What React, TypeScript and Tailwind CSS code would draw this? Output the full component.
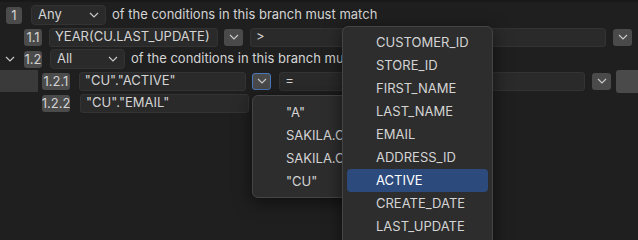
import React from "react";

const Chevron = ({ className = "" }: { className?: string }) => (
  <svg width="10" height="6" viewBox="0 0 10 6" className={className}>
    <path d="M1 1 L5 5 L9 1" fill="none" stroke="#c8c8c8" strokeWidth="1.2" />
  </svg>
);

const Badge = ({ label, w }: { label: string; w: string }) => (
  <div className={`${w} h-[17px] rounded-[3px] bg-[#4b4b4b] text-[#d2d2d2] flex items-center justify-center text-[13px] leading-none`}>
    {label}
  </div>
);

const Field = ({ text, w, ml }: { text: string; w: string; ml: string }) => (
  <div className={`${w} ${ml} h-[19px] rounded-[3px] bg-[#2a2a2a] border border-[#333333] flex items-center pl-[5px] text-[#d4d4d4] text-[13px] whitespace-nowrap overflow-hidden`}>
    {text}
  </div>
);

const ChevBtn = ({ ml, focused = false }: { ml: string; focused?: boolean }) => (
  <div
    className={`w-[19px] h-[17px] ${ml} rounded-[3px] bg-[#4a4a4a] flex items-center justify-center ${
      focused ? "border border-[#4a78b8]" : ""
    }`}
  >
    <Chevron />
  </div>
);

const Select = ({ text, ml }: { text: string; ml: string }) => (
  <div className={`w-[75px] h-[20px] ${ml} rounded-[4px] bg-[#2a2a2a] border border-[#333333] flex items-center justify-between pl-[6px] pr-[6px] text-[#d4d4d4] text-[13px]`}>
    <span>{text}</span>
    <Chevron />
  </div>
);

const values = ['"A"', "SAKILA.CUSTOMER", "SAKILA.CU", '"CU"'];
const columns = [
  "CUSTOMER_ID",
  "STORE_ID",
  "FIRST_NAME",
  "LAST_NAME",
  "EMAIL",
  "ADDRESS_ID",
  "ACTIVE",
  "CREATE_DATE",
  "LAST_UPDATE",
];

export default function App() {
  return (
    <div
      className="relative w-[638px] h-[240px] overflow-hidden bg-[#1f1f1f] border-t-2 border-[#191919] pt-[2px] text-[13px]"
      style={{ fontFamily: "Inter, 'Noto Sans', sans-serif" }}
    >
      {/* 1 */}
      <div className="h-[22px] flex items-center pl-[6px]">
        <Badge label="1" w="w-[16px]" />
        <Select text="Any" ml="ml-[9px]" />
        <span className="ml-[6px] text-[#d4d4d4] whitespace-nowrap">of the conditions in this branch must match</span>
      </div>

      {/* 1.1 */}
      <div className="h-[22px] flex items-center pl-[24px]">
        <Badge label="1.1" w="w-[18px]" />
        <Field text="YEAR(CU.LAST_UPDATE)" w="w-[169px]" ml="ml-[7px]" />
        <ChevBtn ml="ml-[6px]" />
        <Field text=">" w="w-[356px]" ml="ml-[7px]" />
        <ChevBtn ml="ml-[7px]" />
      </div>

      {/* 1.2 */}
      <div className="h-[22px] flex items-center pl-[5px]">
        <Chevron />
        <div className="ml-[9px]">
          <Badge label="1.2" w="w-[18px]" />
        </div>
        <Select text="All" ml="ml-[8px]" />
        <span className="ml-[6px] text-[#d4d4d4] whitespace-nowrap">of the conditions in this branch must match</span>
      </div>

      {/* 1.2.1 */}
      <div className="h-[22px] flex items-center">
        <div className="w-[38px] h-[22px] bg-[#3a3a3a]" />
        <div className="ml-[4px]">
          <Badge label="1.2.1" w="w-[28px]" />
        </div>
        <Field text={'"CU"."ACTIVE"'} w="w-[168px]" ml="ml-[9px]" />
        <ChevBtn ml="ml-[6px]" focused />
        <Field text="=" w="w-[307px]" ml="ml-[8px]" />
        <ChevBtn ml="ml-[7px]" />
        <div className="ml-[5px] w-[22px] h-[23px] rounded-l-[3px] bg-[#4a4a4a]" />
      </div>

      {/* 1.2.2 */}
      <div className="h-[22px] flex items-center pl-[42px]">
        <Badge label="1.2.2" w="w-[28px]" />
        <Field text={'"CU"."EMAIL"'} w="w-[169px]" ml="ml-[10px]" />
      </div>

      {/* values popup */}
      <div className="absolute left-[252px] top-[93px] w-[130px] rounded-[6px] bg-[#2d2d2d] border border-[#444444] shadow-[0_4px_18px_rgba(0,0,0,0.55)] pt-[5px] pb-[4px] overflow-hidden">
        {values.map((v) => (
          <div key={v} className="h-[23px] flex items-center pl-[33px] text-[#d4d4d4] whitespace-nowrap">
            {v}
          </div>
        ))}
      </div>

      {/* columns popup */}
      <div className="absolute left-[342px] top-[24px] w-[151px] h-[230px] rounded-[6px] bg-[#2d2d2d] border border-[#444444] shadow-[0_4px_18px_rgba(0,0,0,0.55)] pt-[4px]">
        {columns.map((c) => (
          <div
            key={c}
            className={`h-[23px] mx-[4px] rounded-[4px] flex items-center pl-[29px] whitespace-nowrap ${
              c === "ACTIVE" ? "bg-[#2c4a7c] text-[#ffffff]" : "text-[#d4d4d4]"
            }`}
          >
            {c}
          </div>
        ))}
      </div>
    </div>
  );
}
